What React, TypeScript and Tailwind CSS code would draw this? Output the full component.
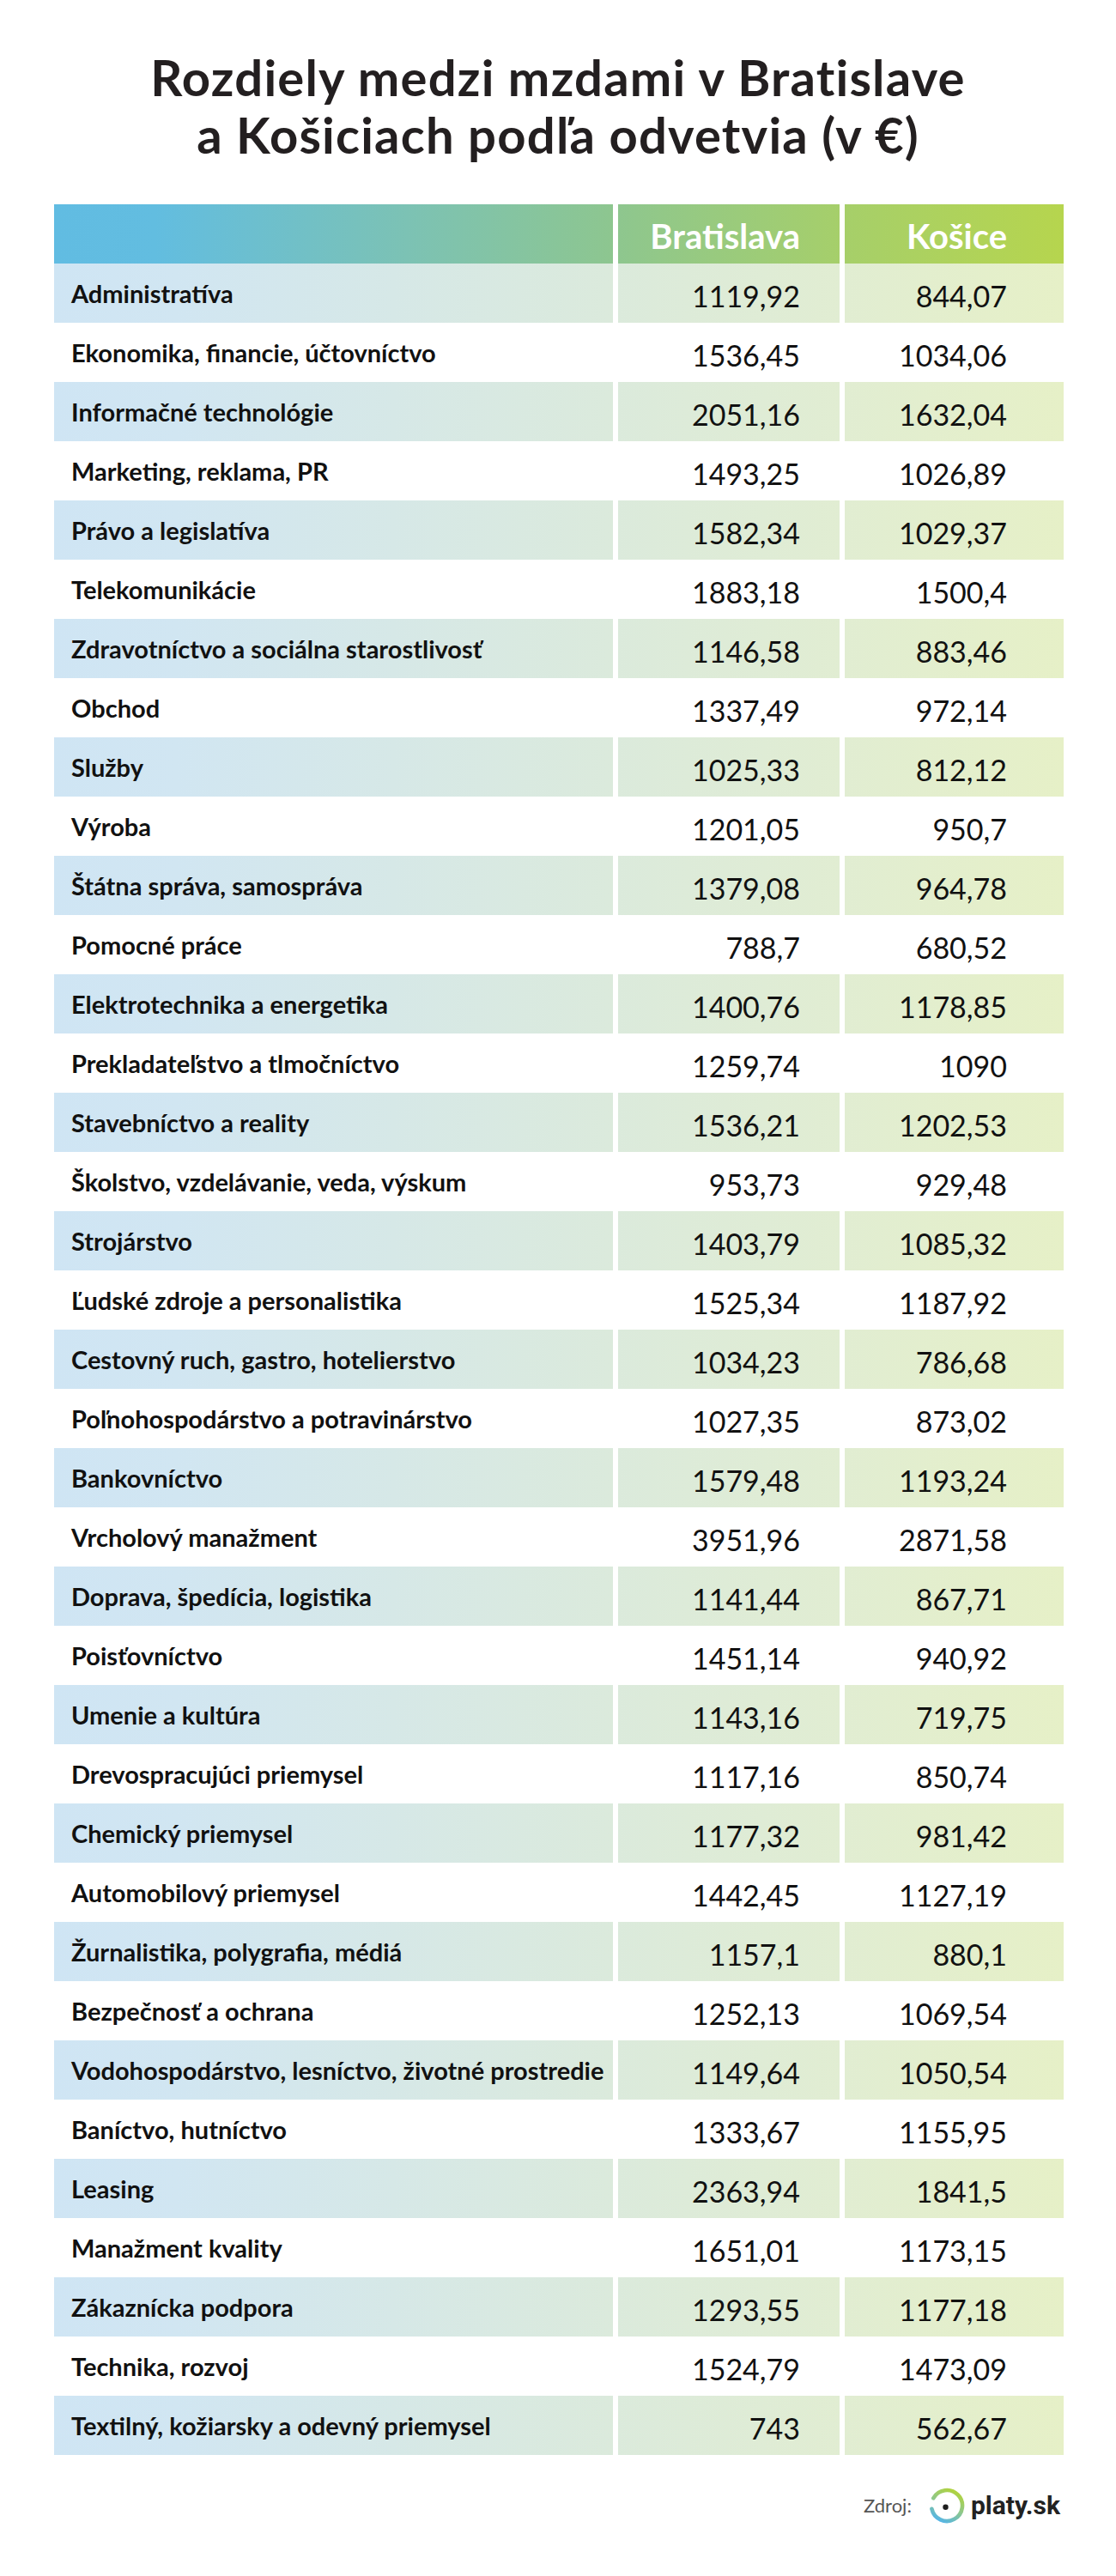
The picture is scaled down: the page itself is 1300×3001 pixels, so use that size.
import React from "react";

type Row = [string, string, string];

const ROWS: Row[] = [
  ["Administratíva", "1119,92", "844,07"],
  ["Ekonomika, financie, účtovníctvo", "1536,45", "1034,06"],
  ["Informačné technológie", "2051,16", "1632,04"],
  ["Marketing, reklama, PR", "1493,25", "1026,89"],
  ["Právo a legislatíva", "1582,34", "1029,37"],
  ["Telekomunikácie", "1883,18", "1500,4"],
  ["Zdravotníctvo a sociálna starostlivosť", "1146,58", "883,46"],
  ["Obchod", "1337,49", "972,14"],
  ["Služby", "1025,33", "812,12"],
  ["Výroba", "1201,05", "950,7"],
  ["Štátna správa, samospráva", "1379,08", "964,78"],
  ["Pomocné práce", "788,7", "680,52"],
  ["Elektrotechnika a energetika", "1400,76", "1178,85"],
  ["Prekladateľstvo a tlmočníctvo", "1259,74", "1090"],
  ["Stavebníctvo a reality", "1536,21", "1202,53"],
  ["Školstvo, vzdelávanie, veda, výskum", "953,73", "929,48"],
  ["Strojárstvo", "1403,79", "1085,32"],
  ["Ľudské zdroje a personalistika", "1525,34", "1187,92"],
  ["Cestovný ruch, gastro, hotelierstvo", "1034,23", "786,68"],
  ["Poľnohospodárstvo a potravinárstvo", "1027,35", "873,02"],
  ["Bankovníctvo", "1579,48", "1193,24"],
  ["Vrcholový manažment", "3951,96", "2871,58"],
  ["Doprava, špedícia, logistika", "1141,44", "867,71"],
  ["Poisťovníctvo", "1451,14", "940,92"],
  ["Umenie a kultúra", "1143,16", "719,75"],
  ["Drevospracujúci priemysel", "1117,16", "850,74"],
  ["Chemický priemysel", "1177,32", "981,42"],
  ["Automobilový priemysel", "1442,45", "1127,19"],
  ["Žurnalistika, polygrafia, médiá", "1157,1", "880,1"],
  ["Bezpečnosť a ochrana", "1252,13", "1069,54"],
  ["Vodohospodárstvo, lesníctvo, životné prostredie", "1149,64", "1050,54"],
  ["Baníctvo, hutníctvo", "1333,67", "1155,95"],
  ["Leasing", "2363,94", "1841,5"],
  ["Manažment kvality", "1651,01", "1173,15"],
  ["Zákaznícka podpora", "1293,55", "1177,18"],
  ["Technika, rozvoj", "1524,79", "1473,09"],
  ["Textilný, kožiarsky a odevný priemysel", "743", "562,67"],
];

function PlatyLogo() {
  return (
    <svg width="42" height="42" viewBox="0 0 42 42" className="shrink-0">
      <defs>
        <linearGradient id="ring" x1="0.75" y1="0" x2="0.25" y2="1">
          <stop offset="0" stopColor="#b1d33c" />
          <stop offset="0.5" stopColor="#8fc88c" />
          <stop offset="1" stopColor="#55b5e6" />
        </linearGradient>
      </defs>
      <path
        d="M5.26 12.27 A18 18 0 1 1 3.4 24.74"
        fill="none"
        stroke="url(#ring)"
        strokeWidth="4.6"
        strokeLinecap="round"
      />
      <circle cx="19.5" cy="22.8" r="3.2" fill="#1f1f1f" />
    </svg>
  );
}

export default function App() {
  return (
    <div className="min-h-[3001px] w-[1300px] bg-white font-['Lato',sans-serif] text-[#111]">
      {/* Title */}
      <h1 className="pt-[56px] text-center text-[58px] font-bold leading-[67px] tracking-[1.2px] text-[#231f20]">
        Rozdiely medzi mzdami v Bratislave
        <br />
        a Košiciach podľa odvetvia (v €)
      </h1>

      {/* Table */}
      <div className="ml-[63px] mt-[48px] w-[1176px]">
        <div className="grid h-[69px] grid-cols-[651px_264px_261px] bg-[linear-gradient(90deg,#61bce2_0%,#62bde0_10%,#7cc2b4_35%,#8dc690_55%,#a6cf6a_78%,#b6d54e_100%)] text-[40px] font-bold leading-none text-white">
          <div />
          <div className="flex items-center justify-end border-l-[6px] border-white pr-[46px] pt-[5px]">
            Bratislava
          </div>
          <div className="flex items-center justify-end border-l-[6px] border-white pr-[66px] pt-[5px]">
            Košice
          </div>
        </div>

        {ROWS.map(([label, ba, ke], i) => (
          <div
            key={label}
            className={
              i % 2 === 0
                ? "grid h-[69px] grid-cols-[651px_264px_261px] bg-[linear-gradient(90deg,#cfe5f4_0%,#d1e6f2_12%,#dbeadc_55%,#e1edd2_78%,#e6f0c7_100%)]"
                : "grid h-[69px] grid-cols-[651px_264px_261px] bg-white"
            }
          >
            <div className="flex items-center whitespace-nowrap pl-[20px] text-[29px] font-bold leading-none">
              {label}
            </div>
            <div className="flex items-center justify-end border-l-[6px] border-white pr-[46px] pt-[7px] text-[34px] leading-none">
              {ba}
            </div>
            <div className="flex items-center justify-end border-l-[6px] border-white pr-[66px] pt-[7px] text-[34px] leading-none">
              {ke}
            </div>
          </div>
        ))}
      </div>

      {/* Source */}
      <div className="mt-[29px] flex h-[60px] items-center justify-end pr-[65px]">
        <span className="mr-[20px] text-[22px] leading-none text-[#555]">Zdroj:</span>
        <PlatyLogo />
        <span className="ml-[7px] font-['Roboto',sans-serif] text-[30px] font-bold leading-none text-[#222]">
          platy.sk
        </span>
      </div>
    </div>
  );
}
